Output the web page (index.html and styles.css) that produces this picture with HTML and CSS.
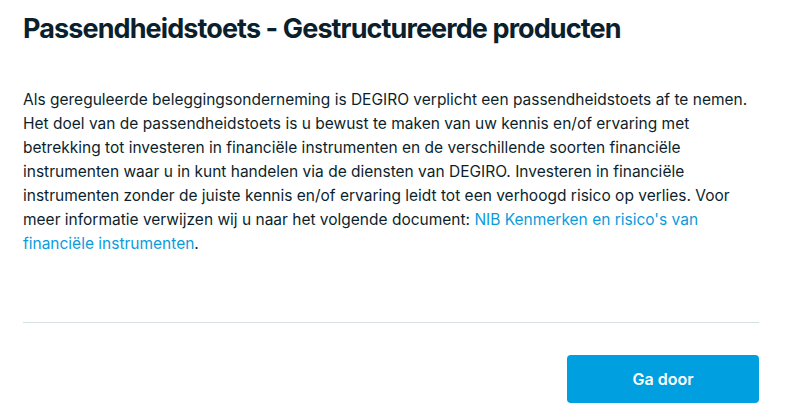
FILE: index.html
```html
<!DOCTYPE html>
<html lang="nl">
<head>
  <meta charset="UTF-8">
  <title>Passendheidstoets</title>
  <link rel="stylesheet" href="styles.css">
</head>
<body>

<div class="dialog">
  <h1 class="title">Passendheidstoets - Gestructureerde producten</h1>

  <p class="intro">
    Als gereguleerde beleggingsonderneming is DEGIRO verplicht een passendheidstoets af te nemen.
    Het doel van de passendheidstoets is u bewust te maken van uw kennis en/of ervaring met
    betrekking tot investeren in financiële instrumenten en de verschillende soorten financiële
    instrumenten waar u in kunt handelen via de diensten van DEGIRO. Investeren in financiële
    instrumenten zonder de juiste kennis en/of ervaring leidt tot een verhoogd risico op verlies.
    Voor meer informatie verwijzen wij u naar het volgende document:
    <a href="#">NIB Kenmerken en risico's van financiële instrumenten</a>.
  </p>

  <div class="footer">
    <button class="btn">Ga door</button>
  </div>
</div>

</body>
</html>
```

FILE: styles.css
```css
* {
  box-sizing: border-box;
}

body {
  margin: 0;
  background: #fff;
  font-family: Inter, "Noto Sans", sans-serif;
  color: #0c1f2c;
}

.dialog {
  width: 786px;
  padding: 12px 27px 0 23px;
}

.title {
  margin: 0;
  font-size: 27px;
  line-height: 34px;
  font-weight: 700;
  letter-spacing: -0.9px;
}

.intro {
  margin: 42px 0 0;
  font-size: 15.5px;
  line-height: 24px;
}

.intro a {
  color: #0a9bdc;
  text-decoration: none;
}

.footer {
  margin-top: 66px;
  padding-top: 32px;
  border-top: 1px solid #d6e1e6;
  display: flex;
  justify-content: flex-end;
}

.btn {
  width: 192px;
  height: 48px;
  background: #009fdf;
  color: #fff;
  border: none;
  border-radius: 4px;
  font-family: Inter, "Noto Sans", sans-serif;
  font-size: 16px;
  font-weight: 600;
  cursor: pointer;
}
```
